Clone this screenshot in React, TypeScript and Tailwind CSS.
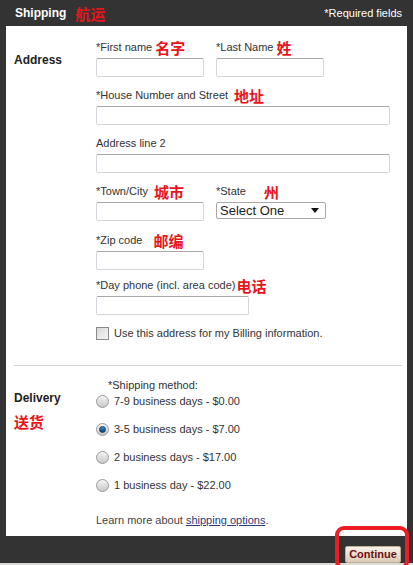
import React from "react";

const cjk = "font-['Noto_Sans_CJK_SC',sans-serif] font-bold text-[#e8141c] text-[15px] leading-none";

function Field({ label, tag, tagGap, width, mb }: { label: string; tag?: string; tagGap?: string; width: string; mb: string }) {
  return (
    <div className={mb}>
      <div className="h-[16px] flex items-center text-[11px] text-[#333]">
        <span>{label}</span>
        {tag && <span className={`${cjk} ${tagGap ?? "ml-[3px]"}`}>{tag}</span>}
      </div>
      <input
        type="text"
        className={`${width} mt-[3px] block h-[19px] border border-[#d3d6dc] border-t-[#a9a9a9] rounded-[2px] bg-white outline-none`}
      />
    </div>
  );
}

function Radio({ checked, label }: { checked?: boolean; label: string }) {
  return (
    <div className="flex items-center h-[14px] mb-[14px]">
      <span className="w-[13px] h-[13px] rounded-full border border-[#9a9a9a] bg-gradient-to-b from-[#f4f4f4] to-[#c8c8c8] flex items-center justify-center">
        {checked && <span className="w-[7px] h-[7px] rounded-full bg-gradient-to-b from-[#3a8fd0] to-[#0d3f6e] border border-[#123b5e]" />}
      </span>
      <span className="ml-[5px] text-[11px] text-[#333]">{label}</span>
    </div>
  );
}

export default function App() {
  return (
    <div className="w-[413px] h-[565px] overflow-hidden bg-[#333] flex flex-col font-['Liberation_Sans','Noto_Sans_CJK_SC',sans-serif]">
      <div className="h-[26px] flex items-center pl-[15px] pr-[11px] text-white">
        <span className="text-[12px] font-bold">Shipping</span>
        <span className={`${cjk} ml-[9px]`}>航运</span>
        <span className="ml-auto text-[11px]">*Required fields</span>
      </div>

      <div className="mx-[6px] h-[510px] bg-white pt-[13px] flex flex-col">
        <div className="flex pl-[8px]">
          <div className="w-[82px] pt-[12px] text-[12px] font-bold text-[#222]">Address</div>
          <div>
            <div className="flex gap-[12px]">
              <Field label="*First name" tag="名字" width="w-[108px]" mb="mb-[10px]" />
              <Field label="*Last Name" tag="姓" width="w-[108px]" mb="mb-[10px]" />
            </div>
            <Field label="*House Number and Street" tag="地址" tagGap="ml-[6px]" width="w-[294px]" mb="mb-[10px]" />
            <Field label="Address line 2" width="w-[294px]" mb="mb-[10px]" />
            <div className="flex gap-[12px] mb-[11px]">
              <Field label="*Town/City" tag="城市" tagGap="ml-[6px]" width="w-[108px]" mb="" />
              <div>
                <div className="h-[16px] flex items-center text-[11px] text-[#333]">
                  <span>*State</span>
                  <span className={`${cjk} ml-[18px]`}>州</span>
                </div>
                <div className="mt-[3px] w-[110px] h-[17px] border border-[#a9a9a9] rounded-[2px] flex items-center pl-[3px] pr-[6px] text-[13px] text-[#222]">
                  <span>Select One</span>
                  <svg className="ml-auto" width="8" height="5" viewBox="0 0 8 5">
                    <path d="M0 0h8L4 5z" fill="#111" />
                  </svg>
                </div>
              </div>
            </div>
            <Field label="*Zip code" tag="邮编" tagGap="ml-[11px]" width="w-[108px]" mb="mb-[7px]" />
            <Field label="*Day phone (incl. area code)" tag="电话" tagGap="ml-[1px]" width="w-[153px]" mb="" />
            <div className="mt-[10px] flex items-center">
              <span className="w-[13px] h-[13px] border border-[#8a8a8a] bg-gradient-to-br from-[#d8d8d8] to-[#f6f6f6]" />
              <span className="ml-[5px] text-[11px] text-[#333]">Use this address for my Billing information.</span>
            </div>
          </div>
        </div>

        <div className="ml-[8px] mr-[5px] mt-[23px] h-px bg-[#d0d0d0]" />

        <div className="flex pl-[8px] mt-[12px]">
          <div className="w-[82px] pt-[11px]">
            <div className="text-[12px] font-bold text-[#222]">Delivery</div>
            <div className={`${cjk} mt-[7px]`}>送货</div>
          </div>
          <div>
            <div className="ml-[12px] text-[11px] text-[#333] h-[14px] leading-[14px]">*Shipping method:</div>
            <div className="mt-[3px]">
              <Radio label="7-9 business days - $0.00" />
              <Radio checked label="3-5 business days - $7.00" />
              <Radio label="2 business days - $17.00" />
              <Radio label="1 business day - $22.00" />
            </div>
            <div className="mt-[19px] text-[11px] text-[#444]">
              Learn more about <a className="text-[#2b3a7a] underline">shipping options</a>.
            </div>
          </div>
        </div>
      </div>

      <div className="h-[27px] flex justify-end items-start pr-[12px] pt-[5px]">
        <div className="relative">
          <button className="h-[17px] w-[56px] rounded-[2px] border border-[#bfae98] bg-gradient-to-b from-[#f8f2ea] to-[#dccab5] text-[11px] font-bold text-[#6a1015] leading-none">
            Continue
          </button>
          <div className="absolute -left-[10px] -right-[8px] -top-[15px] -bottom-[5px] border-[4px] border-[#ee1c24] rounded-[9px]" />
        </div>
      </div>
      <div className="h-[2px] bg-[#dcdcd6]" />
    </div>
  );
}
